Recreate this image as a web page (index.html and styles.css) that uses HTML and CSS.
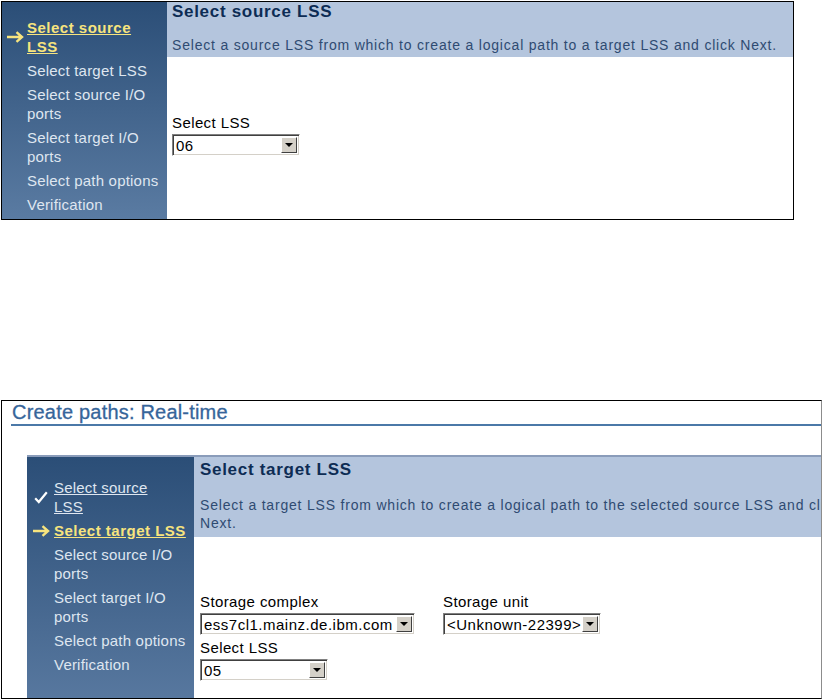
FILE: index.html
```html
<!DOCTYPE html>
<html lang="en">
<head>
    <meta charset="UTF-8">
    <title>Create paths: Real-time</title>
    <link rel="stylesheet" href="styles.css">
</head>
<body>
    <div class="wizard">
        <div class="steps">
            <ul class="step-list">
                <li class="step current">
                    <span class="mark"><svg width="18" height="12" viewBox="0 0 18 12"><path d="M1 6H15.5M10.5 1.2L16 6L10.5 10.8" fill="none" stroke="#f7e47e" stroke-width="2.4"/></svg></span>
                    <a href="#">Select source<br>LSS</a>
                </li>
                <li class="step"><span class="mark"></span><span>Select target LSS</span></li>
                <li class="step"><span class="mark"></span><span>Select source I/O<br>ports</span></li>
                <li class="step"><span class="mark"></span><span>Select target I/O<br>ports</span></li>
                <li class="step"><span class="mark"></span><span>Select path options</span></li>
                <li class="step"><span class="mark"></span><span>Verification</span></li>
            </ul>
        </div>
        <div class="pane">
            <div class="pane-head">
                <h2 class="pane-title">Select source LSS</h2>
                <p class="pane-text">Select a source LSS from which to create a logical path to a target LSS and click Next.</p>
            </div>
            <div class="pane-body">
                <div class="form-row">
                    <div class="field">
                        <label class="field-label">Select LSS</label>
                        <div class="select select-lss"><span class="select-value">06</span><span class="select-btn"></span></div>
                    </div>
                </div>
            </div>
        </div>
    </div>

    <div class="frame">
        <h1 class="frame-title">Create paths: Real-time</h1>
        <div class="wizard is-embedded">
            <div class="steps">
                <ul class="step-list">
                    <li class="step done">
                        <span class="mark"><svg width="14" height="13" viewBox="0 0 14 13"><path d="M1.2 7.2L4.8 11L12.8 1.2" fill="none" stroke="#ffffff" stroke-width="2.2"/></svg></span>
                        <a href="#">Select source<br>LSS</a>
                    </li>
                    <li class="step current">
                        <span class="mark"><svg width="18" height="12" viewBox="0 0 18 12"><path d="M1 6H15.5M10.5 1.2L16 6L10.5 10.8" fill="none" stroke="#f7e47e" stroke-width="2.4"/></svg></span>
                        <a href="#">Select target LSS</a>
                    </li>
                    <li class="step"><span class="mark"></span><span>Select source I/O<br>ports</span></li>
                    <li class="step"><span class="mark"></span><span>Select target I/O<br>ports</span></li>
                    <li class="step"><span class="mark"></span><span>Select path options</span></li>
                    <li class="step"><span class="mark"></span><span>Verification</span></li>
                </ul>
            </div>
            <div class="pane">
                <div class="pane-head">
                    <h2 class="pane-title">Select target LSS</h2>
                    <p class="pane-text">Select a target LSS from which to create a logical path to the selected source LSS and click<br>Next.</p>
                </div>
                <div class="pane-body">
                    <div class="form-row">
                        <div class="field">
                            <label class="field-label">Storage complex</label>
                            <div class="select select-complex"><span class="select-value">ess7cl1.mainz.de.ibm.com</span><span class="select-btn"></span></div>
                        </div>
                        <div class="field">
                            <label class="field-label">Storage unit</label>
                            <div class="select select-unit"><span class="select-value">&lt;Unknown-22399&gt;</span><span class="select-btn"></span></div>
                        </div>
                    </div>
                    <div class="form-row">
                        <div class="field">
                            <label class="field-label">Select LSS</label>
                            <div class="select select-lss"><span class="select-value">05</span><span class="select-btn"></span></div>
                        </div>
                    </div>
                </div>
            </div>
        </div>
    </div>
</body>
</html>
```

FILE: styles.css
```css
body {
    margin: 0;
    padding: 1px 0 0 1px;
    font-family: "Liberation Sans", Arial, sans-serif;
    color: #000;
    background: #fff;
}

/* wizard panel */
.wizard {
    display: flex;
    width: 793px;
    height: 219px;
    box-sizing: border-box;
    border: 1px solid #000;
}
.steps {
    width: 165px;
    flex: none;
    background: linear-gradient(#2b4e77, #5a7ba2);
}
.step-list {
    list-style: none;
    margin: 0;
    padding: 16px 0 0 0;
    display: flex;
    flex-direction: column;
    gap: 5px;
}
.step {
    display: flex;
    align-items: center;
    font-size: 15px;
    line-height: 19px;
    letter-spacing: 0.2px;
    color: #dfe6f0;
    white-space: nowrap;
}
.mark {
    width: 25px;
    flex: none;
    display: flex;
    justify-content: center;
}
.step a {
    color: inherit;
}
.step.current a {
    color: #f7e47e;
    font-weight: bold;
    letter-spacing: 0.5px;
}

.pane {
    flex: 1;
    display: flex;
    flex-direction: column;
    min-width: 0;
}
.pane-head {
    background: #b4c5dd;
    padding: 0 5px 3px;
}
.pane-title {
    margin: 0;
    font-size: 17px;
    line-height: 20px;
    font-weight: bold;
    letter-spacing: 0.7px;
    color: #0d2c54;
}
.pane-text {
    margin: 14px 0 0;
    font-size: 14px;
    line-height: 18px;
    letter-spacing: 0.8px;
    color: #2f4b72;
    white-space: nowrap;
}
.pane-body {
    padding: 57px 5px 0;
}

/* form controls */
.form-row {
    display: flex;
    gap: 28px;
    margin-bottom: 4px;
}
.field-label {
    display: block;
    font-size: 15px;
    line-height: 18px;
    letter-spacing: 0.4px;
    margin-bottom: 2px;
}
.select {
    display: flex;
    height: 22px;
    box-sizing: border-box;
    border: 1px solid;
    border-color: #808080 #fff #fff #808080;
    box-shadow: inset 1px 1px 0 #404040, inset -1px -1px 0 #d4d0c8;
    background: #fff;
    padding: 2px;
}
.select-lss { width: 128px; }
.select-complex { width: 215px; }
.select-unit { width: 158px; }
.select-value {
    flex: 1;
    font-size: 15px;
    line-height: 18px;
    letter-spacing: 0.5px;
    padding-left: 1px;
    white-space: nowrap;
    overflow: hidden;
}
.select-btn {
    width: 16px;
    flex: none;
    box-sizing: border-box;
    background: #d4d0c8;
    border: 1px solid;
    border-color: #fff #404040 #404040 #fff;
    display: flex;
    align-items: center;
    justify-content: center;
}
.select-btn::before {
    content: "";
    border-left: 4px solid transparent;
    border-right: 4px solid transparent;
    border-top: 4px solid #000;
}

/* framed page */
.frame {
    width: 821px;
    height: 299px;
    box-sizing: border-box;
    margin-top: 180px;
    border: 1px solid #000;
    border-right-color: #8c8c8c;
    overflow: hidden;
}
.frame-title {
    margin: 0 0 0 9px;
    padding-left: 1px;
    font-size: 20px;
    line-height: 23px;
    font-weight: normal;
    letter-spacing: 0.2px;
    color: #36659a;
    -webkit-text-stroke: 0.3px #36659a;
    border-bottom: 2px solid #4b79a8;
}
.wizard.is-embedded {
    margin: 29px 0 0 25px;
    width: 900px;
    height: 270px;
    border: 0;
    border-top: 2px solid #8a9cba;
}
.is-embedded .steps {
    width: 167px;
    background: linear-gradient(#2b4e77, #5c7ca3);
}
.is-embedded .step-list {
    padding-top: 21px;
}
.is-embedded .mark {
    width: 27px;
}
.is-embedded .pane-head {
    padding: 3px 6px 5px;
}
.is-embedded .pane-text {
    margin-top: 16px;
}
.is-embedded .pane-body {
    padding: 56px 6px 0;
}
```
